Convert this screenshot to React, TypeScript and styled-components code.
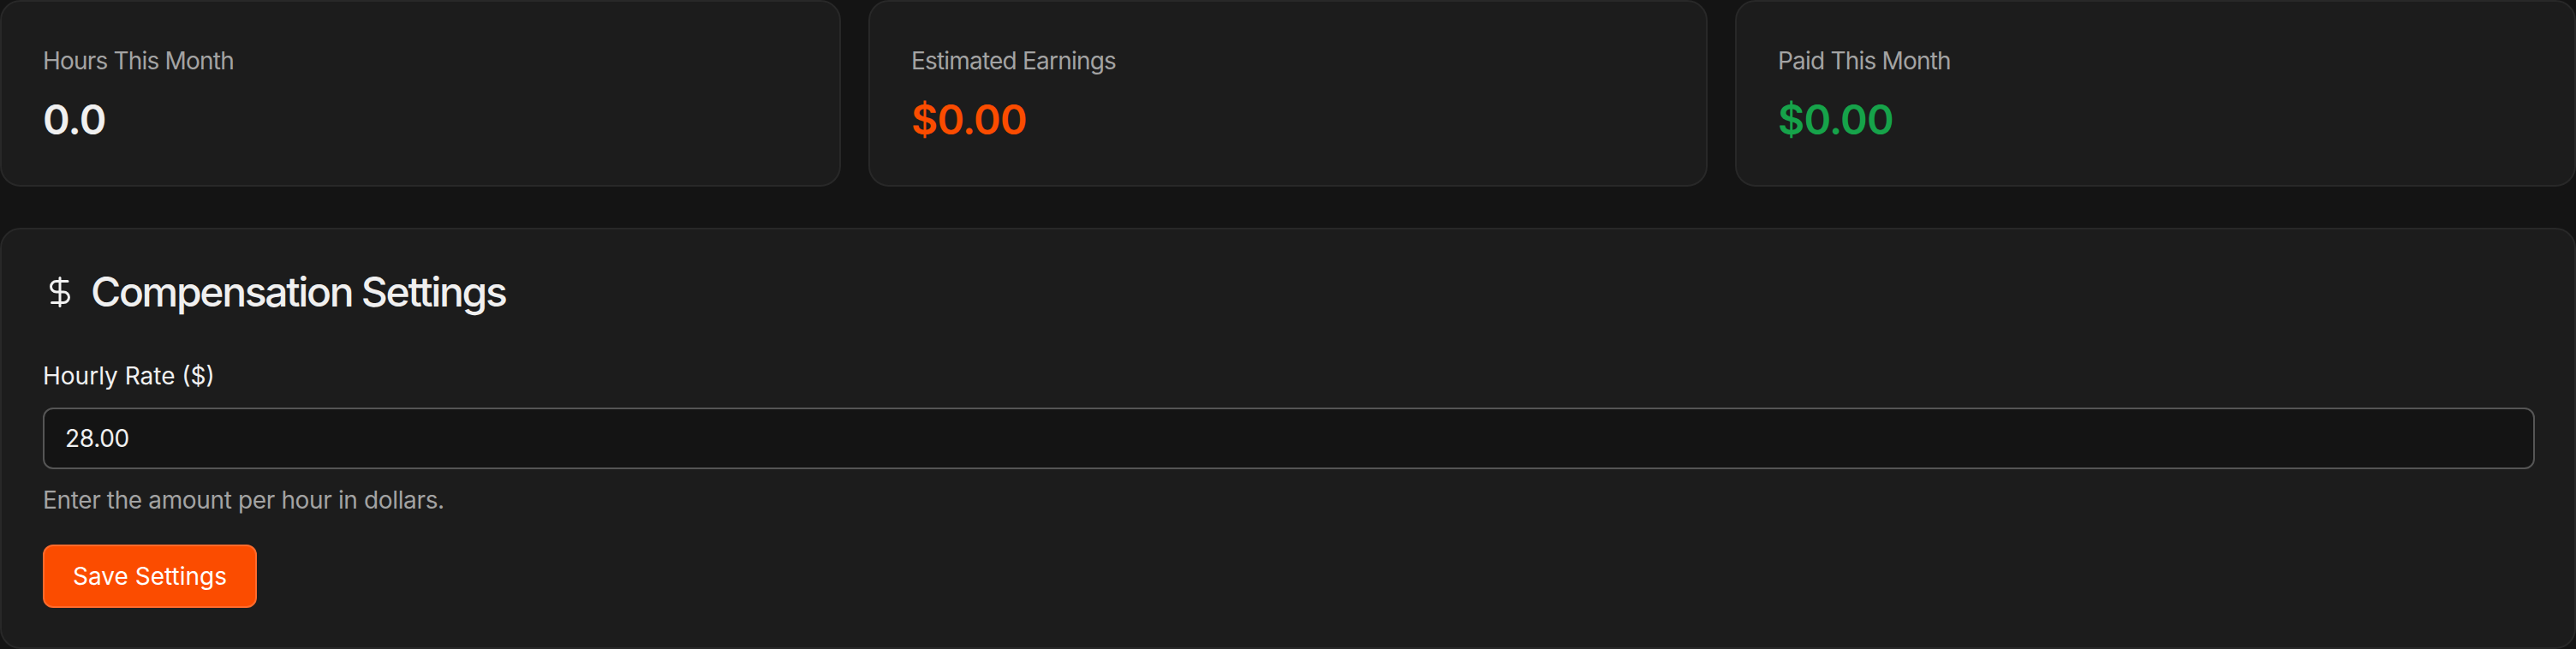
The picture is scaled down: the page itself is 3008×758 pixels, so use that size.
import React from 'react';
import styled, { createGlobalStyle } from 'styled-components';

const GlobalStyle = createGlobalStyle`
  html, body {
    margin: 0;
    height: 100%;
    background: #141414;
    overflow: hidden;
  }
  * { box-sizing: border-box; }
`;

const Page = styled.div`
  display: flex;
  flex-direction: column;
  gap: 48px;
  width: 3008px;
  font-family: Inter, "Liberation Sans", sans-serif;
`;

const StatRow = styled.div`
  display: grid;
  grid-template-columns: 982px 980px 982px;
  gap: 32px;
`;

const Card = styled.div`
  background: #1c1c1c;
  border: 2px solid #282828;
  border-radius: 24px;
`;

const StatCard = styled(Card)`
  height: 218px;
  padding: 49px 48px 0;
`;

const StatLabel = styled.div`
  font-size: 28px;
  line-height: 40px;
  letter-spacing: -0.8px;
  color: #a3a3a3;
`;

const StatValue = styled.div<{ tone: string }>`
  margin-top: 17px;
  font-size: 48px;
  line-height: 64px;
  font-weight: 600;
  letter-spacing: -0.8px;
  color: ${props => props.tone};
`;

const SettingsCard = styled(Card)`
  padding: 48px 46px 48px 48px;
  height: 492px;
`;

const TitleRow = styled.div`
  display: flex;
  align-items: center;
  gap: 16px;
  height: 50px;
  margin-bottom: 53px;
  color: #f0f0f0;
`;

const Title = styled.h2`
  margin: 0;
  font-size: 48px;
  line-height: 50px;
  font-weight: 500;
  letter-spacing: -2.3px;
`;

const FieldLabel = styled.label`
  display: block;
  font-size: 28px;
  line-height: 40px;
  font-weight: 400;
  color: #f0f0f0;
  margin-bottom: 17px;
`;

const RateInput = styled.input`
  display: block;
  width: 100%;
  height: 72px;
  padding: 0 24px;
  background: #141414;
  border: 2px solid #555555;
  border-radius: 12px;
  font-family: inherit;
  font-size: 28px;
  letter-spacing: -0.3px;
  color: #f0f0f0;
  outline: none;
`;

const Hint = styled.p`
  margin: 16px 0 32px;
  font-size: 28px;
  line-height: 40px;
  letter-spacing: -0.36px;
  color: #a3a3a3;
`;

const SaveButton = styled.button`
  display: block;
  width: 250px;
  height: 74px;
  background: #fb4c00;
  border: 2px solid #ff6a2b;
  border-radius: 12px;
  font-family: inherit;
  font-size: 28px;
  font-weight: 400;
  color: #ffffff;
`;

const stats = [
  { label: 'Hours This Month', value: '0.0', tone: '#f0f0f0' },
  { label: 'Estimated Earnings', value: '$0.00', tone: '#fb4c00' },
  { label: 'Paid This Month', value: '$0.00', tone: '#16a34a' },
];

function DollarIcon() {
  return (
    <svg width="40" height="40" viewBox="0 0 40 40" fill="none" stroke="currentColor" strokeWidth="3" strokeLinecap="round" strokeLinejoin="round">
      <path d="M20 3.5V36.5" />
      <path d="M29 7.5H15.75a6.25 6.25 0 0 0 0 12.5h8.5a6.25 6.25 0 0 1 0 12.5H10.5" />
    </svg>
  );
}

function App() {
  return (
    <Page>
      <GlobalStyle />
      <StatRow>
        {stats.map((stat) =>
          <StatCard key={stat.label}>
            <StatLabel>{stat.label}</StatLabel>
            <StatValue tone={stat.tone}>{stat.value}</StatValue>
          </StatCard>
        )}
      </StatRow>
      <SettingsCard>
        <TitleRow>
          <DollarIcon />
          <Title>Compensation Settings</Title>
        </TitleRow>
        <FieldLabel>Hourly Rate ($)</FieldLabel>
        <RateInput defaultValue="28.00" />
        <Hint>Enter the amount per hour in dollars.</Hint>
        <SaveButton>Save Settings</SaveButton>
      </SettingsCard>
    </Page>
  );
}

export default App;
